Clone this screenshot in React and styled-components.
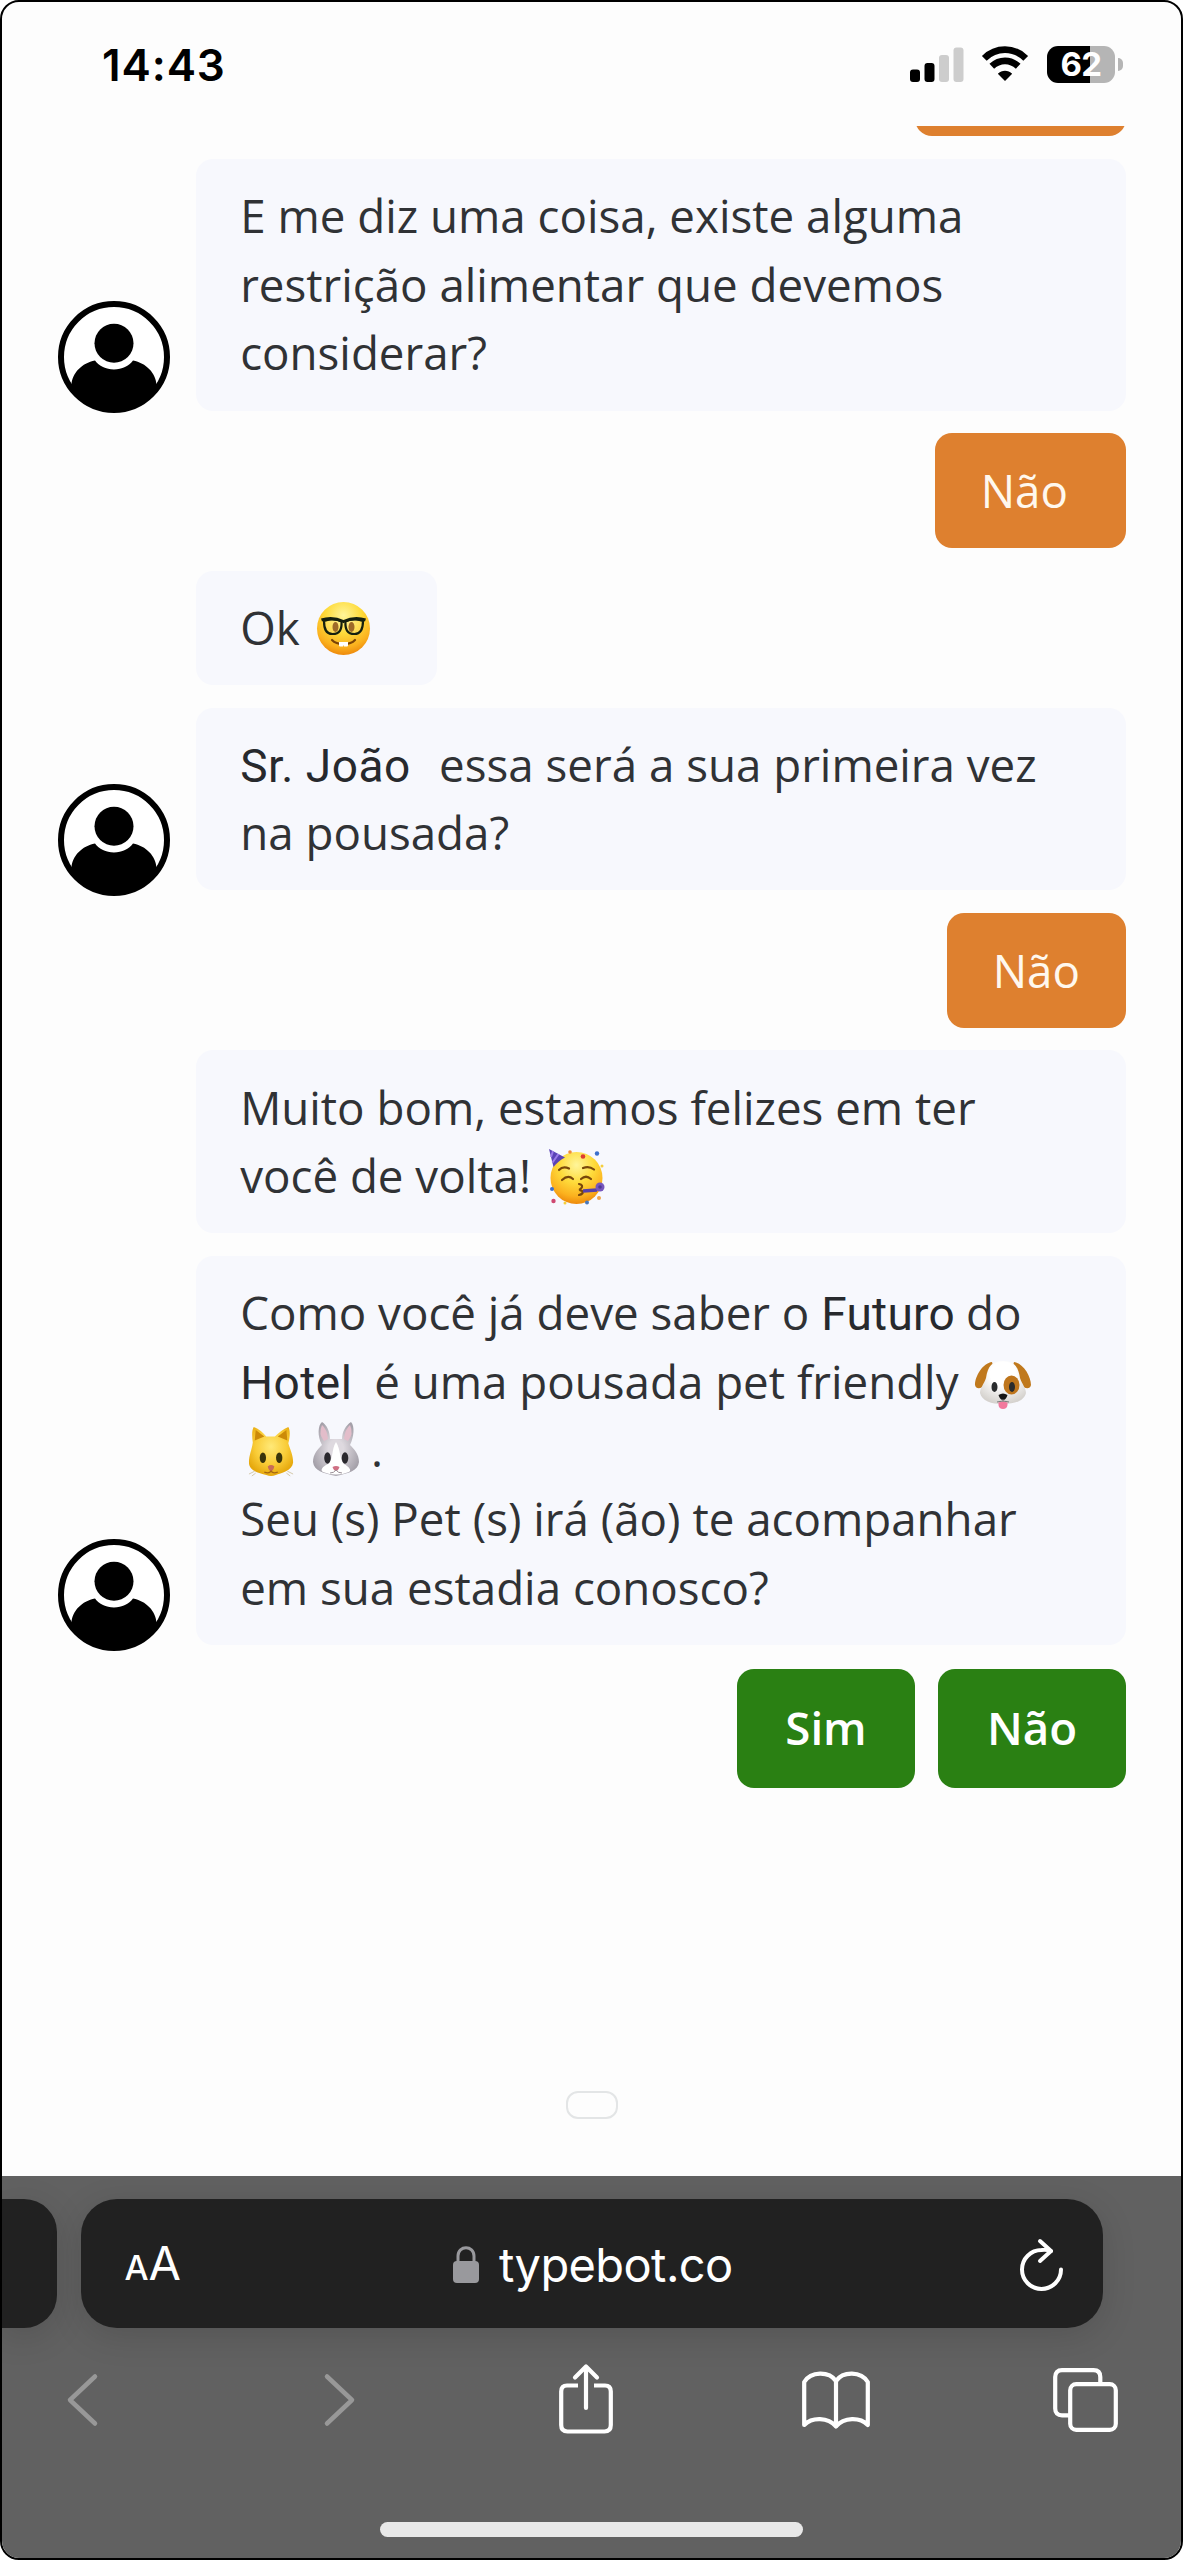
import React from 'react'
import styled, { createGlobalStyle } from 'styled-components'

const GlobalStyle = createGlobalStyle`
* {
    box-sizing: border-box;
}
body {
    margin: 0;
    background-color: #fff;
}
svg {
    display: block;
    flex-shrink: 0;
    overflow: visible;
}
`;

const Phone = styled.div`
display: flex;
flex-direction: column;
width: 1183px;
height: 2560px;
border: 2px solid #000;
border-radius: 19px;
overflow: hidden;
background-color: #fdfdfd;
font-family: "Open Sans", "Noto Sans", sans-serif;
`;

const StatusBar = styled.div`
display: flex;
justify-content: space-between;
align-items: flex-start;
height: 124px;
padding: 44px 58px 0 100px;
`;

const Clock = styled.div`
margin-top: -1px;
font-family: Inter, sans-serif;
font-size: 44px;
line-height: 40px;
font-weight: 600;
letter-spacing: 0.9px;
color: #000;
`;

const StatusIcons = styled.div`
display: flex;
align-items: flex-start;
.signal {
    margin-top: 1px;
}
.wifi {
    margin-left: 18px;
}
`;

const Battery = styled.div`
display: flex;
align-items: center;
justify-content: center;
width: 68px;
height: 37px;
margin-left: 19px;
border-radius: 11px;
background: linear-gradient(to right, #000 63%, #b5b5b5 63%);
font-family: Inter, sans-serif;
font-size: 33px;
line-height: 37px;
font-weight: 700;
letter-spacing: -0.5px;
color: #fff;
`;

const BatteryTip = styled.div`
width: 5px;
height: 13px;
margin: 12px 0 0 3px;
border-radius: 0 6px 6px 0;
background-color: #b5b5b5;
`;

const Chat = styled.div`
display: flex;
flex-direction: column;
gap: 22.86px;
height: 2050px;
padding: 0 55px 0 55.5px;
overflow: hidden;
`;

const BotRow = styled.div`
display: flex;
align-items: flex-end;
gap: 26px;
padding-left: ${props => props.$indent ? 138 : 0}px;
.avatar {
    width: 112px;
    height: 112px;
    flex-shrink: 0;
    margin-bottom: ${props => -(props.$drop || 0)}px;
}
`;

const Bubble = styled.div`
width: ${props => props.$width || 931}px;
padding: 22.2px 0 23.5px 44.7px;
border-radius: 17px;
background-color: #f7f8fd;
color: #303235;
font-size: 45.7px;
line-height: 68.57px;
white-space: nowrap;
svg {
    display: inline-block;
}
.nerd {
    margin-left: 5px;
    vertical-align: -10px;
}
.party {
    margin-left: 5px;
    vertical-align: -12px;
}
.dog {
    margin-left: 5px;
    vertical-align: -10px;
}
.cat {
    margin-left: 8px;
    vertical-align: -10px;
}
.rabbit {
    margin-left: 5px;
    vertical-align: -9px;
}
`;

const Line = styled.div`
height: 68.57px;
`;

const Name = styled.span`
font-family: Roboto, sans-serif;
font-size: 46px;
letter-spacing: ${props => props.$track || 0}px;
margin-right: ${props => props.$after || 0}px;
color: #27292d;
`;

const Answer = styled.div`
align-self: flex-end;
flex-shrink: 0;
width: ${props => props.$width}px;
height: 114.3px;
margin-top: ${props => props.$shift || 0}px;
padding: 22.2px 0 0 45.7px;
border-radius: 17px;
background-color: #de802f;
color: #fff8ee;
font-size: 45.7px;
line-height: 68.57px;
`;

const Choices = styled.div`
display: flex;
justify-content: flex-end;
gap: 23px;
margin-top: 1px;
`;

const Choice = styled.button`
width: ${props => props.$width}px;
height: 119.5px;
padding: 0 0 2px;
border: 0;
border-radius: 17px;
background-color: #2a8013;
color: #fff;
font-family: inherit;
font-size: 45.7px;
font-weight: 600;
`;

const Badge = styled.div`
align-self: center;
width: 52px;
height: 28px;
margin-top: 280px;
border: 2px solid #e3e5e6;
border-radius: 12px;
`;

const Browser = styled.div`
display: flex;
flex-direction: column;
flex: 1;
background-color: #616161;
`;

const TabStrip = styled.div`
display: flex;
gap: 23.5px;
padding-top: 23px;
`;

const PreviousTab = styled.div`
width: 55px;
height: 129px;
border-radius: 0 33px 33px 0;
background-color: #212121;
box-shadow: 0 8px 34px rgba(0, 0, 0, 0.13);
`;

const AddressBar = styled.div`
display: flex;
align-items: center;
justify-content: space-between;
width: 1022px;
height: 129px;
padding: 2px 40px 0 44px;
border-radius: 36px;
background-color: #212121;
box-shadow: 0 8px 34px rgba(0, 0, 0, 0.13);
font-family: Inter, sans-serif;
color: #fff;
`;

const TextSize = styled.div`
display: flex;
align-items: baseline;
gap: 1px;
padding-top: 2px;
font-size: 47px;
line-height: 56px;
letter-spacing: -1px;
small {
    font-size: 34px;
    font-weight: 500;
}
`;

const Site = styled.div`
display: flex;
align-items: center;
gap: 20px;
margin-right: 14px;
font-size: 47px;
line-height: 56px;
letter-spacing: -0.6px;
`;

const Toolbar = styled.div`
display: grid;
grid-template-columns: 257px 236px 243px 251px 65px;
align-items: center;
height: 72px;
margin-top: 36px;
padding-left: 64px;
`;

const HomeIndicator = styled.div`
width: 423px;
height: 15px;
margin: 86px auto 0;
border-radius: 8px;
background-color: #e8e8e8;
`;

const Avatar = () => (
    <svg className="avatar" viewBox="0 0 112 112">
        <circle cx="56" cy="56" r="53" fill="#fff" stroke="#000" strokeWidth="6" />
        <circle cx="56" cy="42.3" r="19.5" />
        <path d="M13.5 84C14 72 24 62 37 59.5C41 65 48 68.5 56 68.5S71 65 75 59.5C88 62 98 72 98.5 84C89 101 74 111 56 111S23 101 13.5 84Z" />
    </svg>
)

const Signal = () => (
    <svg className="signal" width="54" height="35" viewBox="0 0 54 35">
        <rect x="0" y="22.5" width="10" height="12.5" rx="3" />
        <rect x="14.5" y="16" width="10" height="19" rx="3" />
        <rect x="29" y="8" width="10" height="27" rx="3" fill="#cdcdcd" />
        <rect x="43.5" y="0.5" width="10" height="34.5" rx="3" fill="#cdcdcd" />
    </svg>
)

const Wifi = () => (
    <svg className="wifi" width="46" height="35" viewBox="0 0 46 35">
        <g fill="none" stroke="#000" strokeWidth="6.8">
            <path d="M2.3 12.3C14 0.8 32 0.8 43.7 12.3" />
            <path d="M9.8 20.3C17.5 13 28.5 13 36.2 20.3" />
        </g>
        <path d="M23 35L15.8 27.7C19.8 23.8 26.2 23.8 30.2 27.7Z" />
    </svg>
)

const Nerd = () => (
    <svg className="nerd" width="53" height="53" viewBox="0 0 53 53">
        <defs>
            <radialGradient id="face" cx="50%" cy="25%" r="75%">
                <stop offset="0" stopColor="#fff59a" />
                <stop offset="0.45" stopColor="#fedb3b" />
                <stop offset="0.8" stopColor="#fbb11e" />
                <stop offset="1" stopColor="#ee8a0c" />
            </radialGradient>
        </defs>
        <circle cx="26.5" cy="26.5" r="26.5" fill="url(#face)" />
        <ellipse cx="18.5" cy="25" rx="3" ry="5" fill="#8d5104" />
        <ellipse cx="34.5" cy="25" rx="3" ry="5" fill="#8d5104" />
        <g fill="#fff" fillOpacity="0.15" stroke="#15200f" strokeWidth="2.2">
            <path d="M7 19C12 16.5 20 17 24.5 19.5C25 27 23 32 15.5 32C8.5 32 7 26 7 19Z" />
            <path d="M46 19C41 16.5 33 17 28.5 19.5C28 27 30 32 37.5 32C44.5 32 46 26 46 19Z" />
        </g>
        <path d="M4.5 18C12 15.5 21 17 26.5 19.5C32 17 41 15.5 48.5 18" fill="none" stroke="#15200f" strokeWidth="3" />
        <path d="M15 38C20 43.5 33 43.5 38 38" fill="none" stroke="#7b4306" strokeWidth="2.2" strokeLinecap="round" />
        <path d="M22 40H31V43.5Q31 44.5 30 44.5H27L26.5 43L26 44.5H23Q22 44.5 22 43.5Z" fill="#fff" />
    </svg>
)

const Party = () => (
    <svg className="party" width="57" height="56" viewBox="0 0 57 56">
        <circle cx="28.5" cy="29" r="26" fill="url(#face)" />
        <path d="M1 0L17 8.5C12 11 8 14.5 5.5 18Z" fill="#5a43b6" />
        <path d="M5 2L3 8M10.5 5L4.5 13.5" stroke="#9b7bea" strokeWidth="2" />
        <g fill="none" stroke="#79480a" strokeWidth="2.2" strokeLinecap="round">
            <path d="M11 21Q15 16.5 21 19.5M35 19Q41 16.5 46 20.5" />
            <path d="M14 31Q20 25.5 25 30M33 30Q38 25.5 43 30" />
            <path d="M31 35Q36 36 33 39.5Q30 41 34 42Q36 45 31 46" />
        </g>
        <path d="M35 42L49 41" stroke="#5741a8" strokeWidth="3.5" />
        <circle cx="52" cy="38" r="4.5" fill="#7656bd" />
        <circle cx="52" cy="38" r="1.8" fill="#4c3793" />
        <circle cx="35" cy="7.5" r="2.3" fill="#df3c30" />
        <circle cx="49" cy="4.5" r="2.2" fill="#3c70cc" />
        <circle cx="22" cy="3" r="1.8" fill="#f08b37" />
        <circle cx="54" cy="17" r="1.5" fill="#f5cf3d" />
        <circle cx="4" cy="40" r="2" fill="#3c70cc" />
        <circle cx="5.5" cy="52" r="2.2" fill="#cf4871" />
        <circle cx="17" cy="54" r="1.5" fill="#f5cf3d" />
        <circle cx="39" cy="53.5" r="2" fill="#4a78bd" />
        <circle cx="51" cy="49" r="2" fill="#f0a54a" />
    </svg>
)

const Dog = () => (
    <svg className="dog" width="56" height="48" viewBox="0 0 56 48">
        <defs>
            <radialGradient id="fur" cx="50%" cy="30%" r="70%">
                <stop offset="0.4" stopColor="#fff" />
                <stop offset="1" stopColor="#d5d2ce" />
            </radialGradient>
        </defs>
        <path d="M17 1C8 2 0 15 0 24C1 29 7 28 10 23L19 8ZM39 1C48 2 56 15 56 24C55 29 49 28 46 23L37 8Z" fill="#c0791d" />
        <path d="M28 0C17 0 13 5 11 17C9 23 5 27 5 32C7 40 16 43 28 43S49 40 51 32C51 27 47 23 45 17C43 5 39 0 28 0Z" fill="url(#fur)" />
        <ellipse cx="36.5" cy="24" rx="8" ry="9.5" fill="#be751c" />
        <ellipse cx="19.5" cy="26" rx="3" ry="5" fill="#292b2d" />
        <ellipse cx="37" cy="26" rx="3" ry="5" fill="#292b2d" />
        <path d="M23.5 34Q28 31 32.5 34Q31 39 28 39T23.5 34Z" fill="#151515" />
        <path d="M22 41Q28 39 34 41M28 38V41" fill="none" stroke="#777" />
        <path d="M23.5 41.5Q28 40 32.5 41.5V44Q32 48 28 48T23.5 44Z" fill="#f2799d" />
    </svg>
)

const Cat = () => (
    <svg className="cat" width="48" height="51" viewBox="0 0 50 51">
        <defs>
            <radialGradient id="cat" cx="50%" cy="40%" r="60%">
                <stop offset="0" stopColor="#ffe978" />
                <stop offset="0.6" stopColor="#f9cc37" />
                <stop offset="1" stopColor="#e6a80d" />
            </radialGradient>
        </defs>
        <path d="M5 16C4 9 4 3 6 0C11 2 16 6 19 10H28C32 6 37 2 42 0C44 3 44 9 42 17C44 24 47 29 47 37C46 46 34 48 29 50Q24 52 19 50C12 48 1 46 1 37C1 29 4 24 5 16Z" fill="url(#cat)" />
        <path d="M7 14L8 3L17 10ZM41 14L40 3L31 10Z" fill="#cc8a08" />
        <ellipse cx="15.5" cy="32" rx="3.3" ry="5.5" fill="#39340b" />
        <ellipse cx="32.5" cy="32" rx="3.3" ry="5.5" fill="#39340b" />
        <path d="M20.5 41Q24 38 27.5 41Q26 46 24 46T20.5 41Z" fill="#c86c57" />
        <path d="M17 47Q22 49 24 46Q26 49 31 47" fill="none" stroke="#a56812" strokeWidth="1.4" />
        <path d="M7 46L1 49M8 48L4 51M41 46L47 49M40 48L44 51" stroke="#d2c7a7" />
    </svg>
)

const Rabbit = () => (
    <svg className="rabbit" width="46" height="54" viewBox="0 0 46 54">
        <defs>
            <radialGradient id="rabbit" cx="50%" cy="50%" r="55%">
                <stop offset="0.3" stopColor="#ded9df" />
                <stop offset="1" stopColor="#a4a0a9" />
            </radialGradient>
        </defs>
        <path d="M9 23C4 14 5 3 9 0C14 3 17 10 17 17H29C29 10 33 3 38 0C42 4 41 15 37 23C41 27 46 32 46 40C45 49 36 51 23 54C10 51 1 49 0 40C0 32 5 27 9 23Z" fill="url(#rabbit)" />
        <path d="M9 3Q5 12 11 19L15 17Q14 7 9 3ZM37 3Q41 12 35 19L31 17Q32 7 37 3Z" fill="#e3bdca" />
        <path d="M23 20C18 28 21 36 15 42C9 45 7 48 10 50Q23 55 36 50C39 48 36 45 31 42C26 36 28 28 23 20Z" fill="#fff" />
        <ellipse cx="14.5" cy="36" rx="3.3" ry="5.8" fill="#2a282d" />
        <ellipse cx="32" cy="36" rx="3.3" ry="5.8" fill="#2a282d" />
        <path d="M19.5 45Q23 43 26.5 45Q25 49 23 49T19.5 45Z" fill="#cf7084" />
        <path d="M17 51Q21 51 23 48Q25 51 29 51" fill="none" stroke="#998f96" />
    </svg>
)

const Lock = () => (
    <svg width="26" height="37" viewBox="0 0 26 37">
        <path d="M5 18V10C5 -1 21 -1 21 10V18" fill="none" stroke="#99999d" strokeWidth="3" />
        <rect y="15" width="26" height="22" rx="4" fill="#99999d" />
    </svg>
)

const Reload = () => (
    <svg width="43" height="52" viewBox="0 0 43 52" fill="none" stroke="#fff" strokeWidth="4" strokeLinecap="round" strokeLinejoin="round">
        <path d="M41 30.5A19.5 19.5 0 1 1 21.5 11Q27 10.5 31 12" />
        <path d="M20 2L31 12L20 22" />
    </svg>
)

const Chevron = ({ points }) => (
    <svg width="33" height="56" viewBox="0 0 33 56" fill="none" stroke="#989898" strokeWidth="4.5" strokeLinecap="round" strokeLinejoin="round">
        <polyline points={points} />
    </svg>
)

const Share = () => (
    <svg width="54" height="70" viewBox="0 1 54 70" fill="none" stroke="#fff" strokeWidth="4.2" strokeLinecap="round" strokeLinejoin="round">
        <path d="M19 21.5H8Q2.2 21.5 2.2 27.5V61Q2.2 67.5 8.5 67.5H45.5Q51.8 67.5 51.8 61V27.5Q51.8 21.5 46 21.5H35" strokeLinecap="butt" />
        <path d="M27 44V3M16 13.5L27 2.5L38 13.5" />
    </svg>
)

const Book = () => (
    <svg width="68" height="58" viewBox="0 0 68 58" fill="none" stroke="#fff" strokeWidth="4.2" strokeLinecap="round" strokeLinejoin="round">
        <path d="M34 10C27 0 9 0 2.2 11V54C10 46 26 46 34 55.5C42 46 58 46 65.8 54V11C59 0 41 0 34 10Z" />
        <path d="M34 10V55" />
    </svg>
)

const Tabs = () => (
    <svg width="65" height="64" viewBox="0 0 65 64" fill="none" stroke="#fff" strokeWidth="4.2">
        <path d="M16 47.3H9Q2.2 47.3 2.2 40.5V9Q2.2 2.2 9 2.2H40.5Q47.3 2.2 47.3 9V16" />
        <rect x="17.2" y="16.2" width="45.6" height="45.6" rx="6" />
    </svg>
)

const App = () => {
    return (
        <>
            <GlobalStyle />
            <Phone>
                <StatusBar>
                    <Clock>14:43</Clock>
                    <StatusIcons>
                        <Signal />
                        <Wifi />
                        <Battery>62</Battery>
                        <BatteryTip />
                    </StatusIcons>
                </StatusBar>
                <Chat>
                    {/* end of the previous answer, scrolled under the status bar */}
                    <Answer $width={211} $shift={-104} />
                    <BotRow $drop={2}>
                        <Avatar />
                        <Bubble>
                            <Line>E me diz uma coisa, existe alguma</Line>
                            <Line>restrição alimentar que devemos</Line>
                            <Line>considerar?</Line>
                        </Bubble>
                    </BotRow>
                    <Answer $width={191}>Não</Answer>
                    <BotRow $indent>
                        <Bubble $width={241}>
                            <Line>Ok <Nerd /></Line>
                        </Bubble>
                    </BotRow>
                    <BotRow $drop={5.5}>
                        <Avatar />
                        <Bubble>
                            <Line><Name $track={0.5} $after={16.5}>Sr. João</Name> essa será a sua primeira vez</Line>
                            <Line>na pousada?</Line>
                        </Bubble>
                    </BotRow>
                    <Answer $width={179}>Não</Answer>
                    <BotRow $indent>
                        <Bubble>
                            <Line>Muito bom, estamos felizes em ter</Line>
                            <Line>você de volta! <Party /></Line>
                        </Bubble>
                    </BotRow>
                    <BotRow $drop={6}>
                        <Avatar />
                        <Bubble>
                            <Line>Como você já deve saber o <Name $track={0.3} $after={-1}>Futuro</Name> do</Line>
                            <Line><Name $track={0.5} $after={10}>Hotel</Name> é uma pousada pet friendly <Dog /></Line>
                            <Line><Cat /> <Rabbit /> .</Line>
                            <Line>Seu (s) Pet (s) irá (ão) te acompanhar</Line>
                            <Line>em sua estadia conosco?</Line>
                        </Bubble>
                    </BotRow>
                    <Choices>
                        <Choice $width={178}>Sim</Choice>
                        <Choice $width={188}>Não</Choice>
                    </Choices>
                    <Badge />
                </Chat>
                <Browser>
                    <TabStrip>
                        <PreviousTab />
                        <AddressBar>
                            <TextSize><small>A</small>A</TextSize>
                            <Site><Lock />typebot.co</Site>
                            <Reload />
                        </AddressBar>
                    </TabStrip>
                    <Toolbar>
                        <Chevron points="29,4.5 4,28 29,51.5" />
                        <Chevron points="4,4.5 29,28 4,51.5" />
                        <Share />
                        <Book />
                        <Tabs />
                    </Toolbar>
                    <HomeIndicator />
                </Browser>
            </Phone>
        </>
    )
}

export default App;
